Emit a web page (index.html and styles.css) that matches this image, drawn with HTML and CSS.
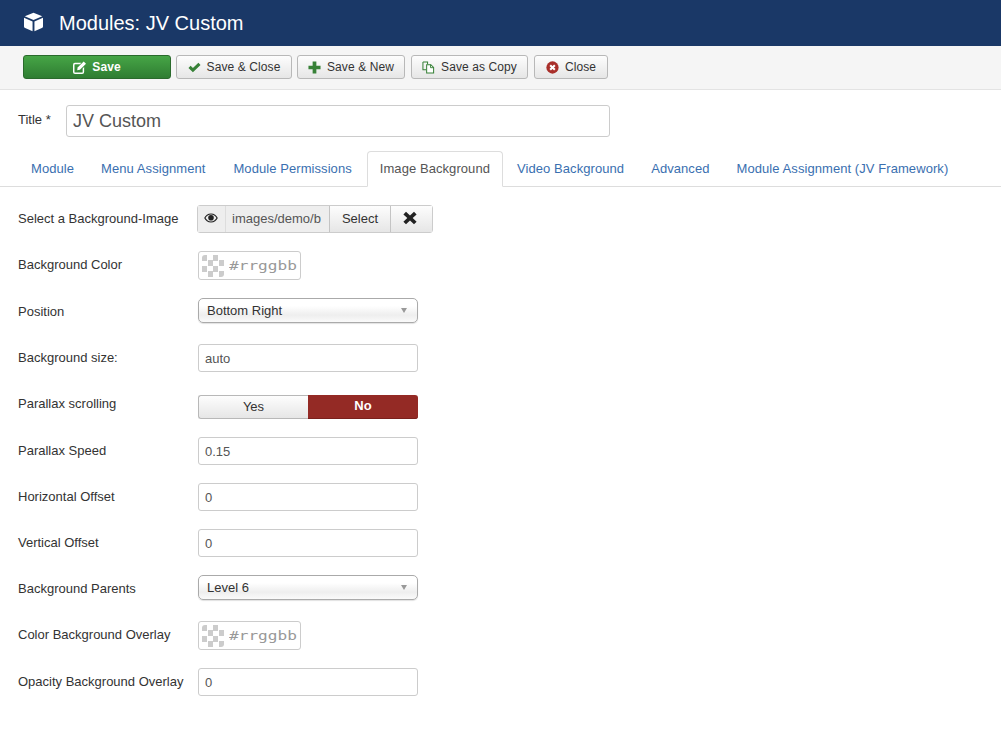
FILE: index.html
```html
<!DOCTYPE html>
<html lang="en">
<head>
<meta charset="utf-8">
<title>Modules: JV Custom</title>
<link rel="stylesheet" href="styles.css">
</head>
<body>
<header class="topbar">
  <svg class="cube" viewBox="0 0 20 20"><path d="M10 0.3 L19.2 4 L10 7.8 L0.8 4 Z"/><path d="M0 5.6 L9 9.4 L9 19.8 L1.2 16.4 Q0 15.9 0 14.8 Z"/><path d="M20 5.6 L11 9.4 L11 19.8 L18.8 16.4 Q20 15.9 20 14.8 Z"/></svg>
  <h1 class="page-title">Modules: JV Custom</h1>
</header>
<nav class="toolbar">
  <button class="btn btn-save"><svg class="ico" viewBox="0 0 14 14"><path fill="#fff" d="M2 2h7L7.5 3.6H2.2q-.6 0-.6.6v7.6q0 .6.6.6h7.6q.6 0 .6-.6V8l1.6-1.6v5.4q0 2.2-2.2 2.2H2.2Q0 14 0 11.8V4.2Q0 2 2 2z"/><path fill="#fff" d="M11.5 0.5 L14 3 L7.5 9.5 L4.5 10 L5 7 Z"/></svg>Save</button>
  <button class="btn btn-close-save"><svg class="ico" viewBox="0 0 14 14"><path fill="#378137" d="M0.5 7.5 L2.8 5 L5.3 7.6 L11.2 1.8 L13.5 4.2 L5.3 12.2 Z"/></svg>Save &amp; Close</button>
  <button class="btn btn-new"><svg class="ico" viewBox="0 0 14 14"><path fill="#378137" d="M5 0.5h4v4.5h4.5v4H9v4.5H5V9H0.5V5H5z"/></svg>Save &amp; New</button>
  <button class="btn btn-copy"><svg class="ico" viewBox="0 0 14 14"><path fill="none" stroke="#378137" stroke-width="1.1" d="M1 1h5v2.5M1 1v8.5h3.5"/><path fill="#fff" stroke="#378137" stroke-width="1.1" d="M5 4h4.5l3 3v6H5z"/><path fill="none" stroke="#378137" stroke-width="1" d="M9.2 4v3.2h3.2"/></svg>Save as Copy</button>
  <button class="btn btn-cancel"><svg class="ico" viewBox="0 0 14 14"><circle cx="7" cy="7" r="6.6" fill="#a92f2a"/><path stroke="#fff" stroke-width="2.2" d="M4.5 4.5l5 5M9.5 4.5l-5 5"/></svg>Close</button>
</nav>
<main class="content">
  <div class="title-row">
    <label class="title-label">Title *</label>
    <input class="title-input" type="text" value="JV Custom">
  </div>
  <ul class="tabs">
    <li class="tab">Module</li>
    <li class="tab">Menu Assignment</li>
    <li class="tab">Module Permissions</li>
    <li class="tab active">Image Background</li>
    <li class="tab">Video Background</li>
    <li class="tab">Advanced</li>
    <li class="tab">Module Assignment (JV Framework)</li>
  </ul>
  <form class="fields">
    <div class="row">
      <label>Select a Background-Image</label>
      <div class="media">
        <span class="media-eye"><svg viewBox="0 0 14 10"><path d="M7 0.5C3.8 0.5 1.4 2.6 0.2 5c1.2 2.4 3.6 4.5 6.8 4.5s5.6-2.1 6.8-4.5C12.6 2.6 10.2.5 7 .5zm0 1.1c2.4 0 4.4 1.4 5.5 3.4-1.1 2-3.1 3.4-5.5 3.4S2.6 7 1.5 5C2.6 3 4.6 1.6 7 1.6z"/><circle cx="7" cy="4.8" r="2.8"/></svg></span>
        <span class="media-path">images/demo/b</span>
        <span class="media-btn media-select">Select</span>
        <span class="media-btn media-clear"><svg viewBox="0 0 14 14"><path d="M3 0.8 L7 4.6 L11 0.8 L13.6 3.4 L9.7 7 L13.6 10.7 L11 13.3 L7 9.5 L3 13.3 L0.4 10.7 L4.3 7 L0.4 3.4 Z"/></svg></span>
      </div>
    </div>
    <div class="row">
      <label>Background Color</label>
      <div class="color"><span class="swatch"></span><span class="hex">#rrggbb</span></div>
    </div>
    <div class="row">
      <label>Position</label>
      <div class="select"><span>Bottom Right</span><i class="caret"></i></div>
    </div>
    <div class="row">
      <label>Background size:</label>
      <input class="field" type="text" value="auto">
    </div>
    <div class="row">
      <label>Parallax scrolling</label>
      <div class="toggle"><span class="toggle-yes">Yes</span><span class="toggle-no">No</span></div>
    </div>
    <div class="row">
      <label>Parallax Speed</label>
      <input class="field" type="text" value="0.15">
    </div>
    <div class="row">
      <label>Horizontal Offset</label>
      <input class="field" type="text" value="0">
    </div>
    <div class="row">
      <label>Vertical Offset</label>
      <input class="field" type="text" value="0">
    </div>
    <div class="row">
      <label>Background Parents</label>
      <div class="select"><span>Level 6</span><i class="caret"></i></div>
    </div>
    <div class="row">
      <label>Color Background Overlay</label>
      <div class="color"><span class="swatch"></span><span class="hex">#rrggbb</span></div>
    </div>
    <div class="row">
      <label>Opacity Background Overlay</label>
      <input class="field" type="text" value="0">
    </div>
  </form>
</main>
</body>
</html>
```
FILE: styles.css
```css
* { box-sizing: border-box; }
html, body { margin: 0; padding: 0; }
body {
  width: 1001px;
  height: 733px;
  overflow: hidden;
  background: #fff;
  color: #333;
  font-family: "Liberation Sans", Arial, sans-serif;
  font-size: 13px;
}
.topbar {
  height: 46px;
  background: #1a3867;
  display: flex;
  align-items: center;
  padding-left: 24px;
  color: #fff;
}
.cube { width: 19px; height: 20px; fill: #fff; margin-right: 16px; margin-top: -2px; }
.page-title { margin: -1px 0 0; font-size: 20px; font-weight: 400; line-height: 46px; }
.toolbar {
  height: 44px;
  background: #f5f5f5;
  border-bottom: 1px solid #e3e3e3;
  display: flex;
  align-items: flex-start;
  padding: 9px 0 0 23px;
  gap: 5px;
}
.btn {
  height: 24px;
  padding: 0;
  display: flex;
  align-items: center;
  justify-content: center;
  font: inherit;
  font-size: 12px;
  letter-spacing: 0.1px;
  color: #333;
  border: 1px solid #b8b8b8;
  border-radius: 3px;
  background: linear-gradient(#fdfdfd, #e6e6e6);
}
.ico { width: 13px; height: 13px; margin-right: 6px; }
.btn-save {
  width: 148px;
  color: #fff;
  font-weight: 700;
  background: linear-gradient(#46a546, #2f7d32);
  border-color: #2a6a2c;
}
.btn-close-save { width: 116px; }
.btn-new { width: 108px; }
.btn-copy { width: 117px; margin-left: 1px; }
.btn-cancel { width: 74px; margin-left: 1px; }
.content { padding: 15px 0 0 18px; }
.title-row { display: flex; align-items: flex-start; }
.title-label { width: 48px; padding-top: 7px; }
.title-input {
  width: 544px;
  height: 32px;
  padding: 0 6px;
  font: inherit;
  font-size: 18px;
  color: #555;
  border: 1px solid #ccc;
  border-radius: 3px;
}
.tabs {
  list-style: none;
  display: flex;
  margin: 14px 0 0 -18px;
  padding: 0 0 0 18px;
  height: 36px;
  border-bottom: 1px solid #ddd;
}
.tab {
  height: 35px;
  line-height: 35px;
  padding: 0 13px;
  margin-right: 2px;
  letter-spacing: 0.07px;
  color: #3a6fb0;
}
.tab:first-child,
.tab.active,
.tab.active ~ .tab { margin-right: 1px; }
.tab.active {
  height: 36px;
  color: #555;
  background: #fff;
  border: 1px solid #ddd;
  border-bottom-color: #fff;
  border-radius: 4px 4px 0 0;
  padding: 0 12px;
  line-height: 34px;
}
.fields {
  margin-top: 18px;
  display: grid;
  grid-template-rows: 46px 47px 46px 46px 47px 46px 46px 46px 46px 47px 46px;
}
.row { display: flex; align-items: flex-start; }
.row label { width: 180px; padding-top: 6px; }
.field {
  width: 220px;
  height: 28px;
  padding: 0 6px;
  font: inherit;
  color: #555;
  border: 1px solid #ccc;
  border-radius: 3px;
}
.media {
  display: flex;
  height: 28px;
  width: 236px;
  margin-left: -1px;
  border: 1px solid #ccc;
  border-radius: 3px;
  color: #555;
}
.media-eye {
  width: 28px;
  background: #eee;
  border-right: 1px solid #ddd;
  display: flex;
  align-items: center;
  justify-content: center;
}
.media-eye svg { width: 14px; height: 10px; fill: #222; margin: -3px 0 0 -2px; }
.media-path {
  width: 103px;
  background: #eee;
  padding-left: 6px;
  line-height: 26px;
  white-space: nowrap;
  overflow: hidden;
}
.media-btn {
  display: flex;
  align-items: center;
  justify-content: center;
  padding-bottom: 1px;
  background: linear-gradient(#fdfdfd, #e6e6e6);
  border-left: 1px solid #c4c4c4;
  color: #333;
}
.media-select { width: 61px; }
.media-clear { flex: 1; }
.media-clear svg { width: 14px; height: 14px; fill: #222; margin: -2px 0 0 -3px; }
.color {
  width: 103px;
  height: 29px;
  display: flex;
  align-items: center;
  gap: 5px;
  padding-left: 3px;
  border: 1px solid #ccc;
  border-radius: 3px;
}
.swatch {
  width: 22px;
  height: 22px;
  border-radius: 3px;
  background-color: #fff;
  background-image: conic-gradient(#fff 25%, #ccc 0 50%, #fff 0 75%, #ccc 0);
  background-size: 11px 11px;
}
.hex {
  display: inline-block;
  font-family: "DejaVu Sans Mono", monospace;
  font-size: 12.5px;
  color: #999;
  transform: scaleX(1.29);
  transform-origin: left center;
}
.select {
  width: 220px;
  height: 25px;
  display: flex;
  align-items: center;
  justify-content: space-between;
  padding: 0 10px 1px 8px;
  border: 1px solid #aaa;
  border-radius: 5px;
  background: linear-gradient(#fff, #fff 30%, #eee 70%, #fafafa);
  box-shadow: 0 1px 1px rgba(0,0,0,.12);
}
.caret {
  border: 3.5px solid transparent;
  border-top: 5px solid #999;
  border-bottom: 0;
}
.toggle {
  display: flex;
  width: 220px;
  height: 24px;
  margin-top: 5px;
  text-align: center;
  line-height: 22px;
}
.toggle-yes {
  flex: 0 0 110px;
  border: 1px solid #b8b8b8;
  border-right: 0;
  border-radius: 3px 0 0 3px;
  background: linear-gradient(#fdfdfd, #e6e6e6);
}
.toggle-no {
  flex: 1;
  color: #fff;
  font-weight: 700;
  background: #942a25;
  border-radius: 0 3px 3px 0;
  box-shadow: inset 0 -1px 0 #7a201c;
}
```
